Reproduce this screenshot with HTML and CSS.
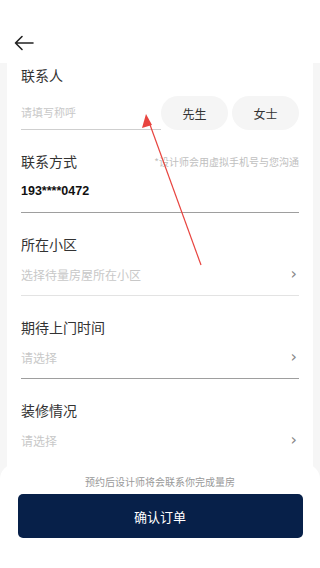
FILE: index.html
```html
<!DOCTYPE html>
<html lang="zh-CN">
<head>
<meta charset="utf-8">
<meta name="viewport" content="width=320, initial-scale=1">
<title>预约量房</title>
<link rel="stylesheet" href="styles.css">
</head>
<body>
<div class="page">
  <header class="topbar">
    <svg class="back" width="20" height="16" viewBox="0 0 20 16" fill="none" stroke="#222" stroke-width="1.6" stroke-linecap="round" stroke-linejoin="round">
      <path d="M19 8H1.5M8 1.5L1.5 8L8 14.5"/>
    </svg>
  </header>
  <main class="card">
    <section class="sec sec-first">
      <div class="label">联系人</div>
      <div class="name-row">
        <div class="name-input">请填写称呼</div>
        <div class="pill">先生</div>
        <div class="pill">女士</div>
      </div>
    </section>
    <section class="sec sec-dark">
      <div class="label-row">
        <div class="label">联系方式</div>
        <div class="hint">*设计师会用虚拟手机号与您沟通</div>
      </div>
      <div class="value phone">193****0472</div>
    </section>
    <section class="sec sec-light">
      <div class="label">所在小区</div>
      <div class="value select">
        <span>选择待量房屋所在小区</span>
        <span class="chev">›</span>
      </div>
    </section>
    <section class="sec sec-dark">
      <div class="label">期待上门时间</div>
      <div class="value select">
        <span>请选择</span>
        <span class="chev">›</span>
      </div>
    </section>
    <section class="sec sec-none">
      <div class="label">装修情况</div>
      <div class="value select">
        <span>请选择</span>
        <span class="chev">›</span>
      </div>
    </section>
  </main>
  <footer class="footer">
    <div class="tip">预约后设计师将会联系你完成量房</div>
    <div class="confirm">确认订单</div>
  </footer>
  <svg class="annot" width="320" height="568" viewBox="0 0 320 568">
    <line x1="201" y1="265" x2="149" y2="122" stroke="#e8443f" stroke-width="1.2"/>
    <polygon points="146,114 142,128 152,125" fill="#e8443f"/>
  </svg>
</div>
</body>
</html>
```
FILE: styles.css
```css
* { box-sizing: border-box; }
html, body { margin: 0; padding: 0; }
body {
  font-family: "Noto Sans CJK SC", "Noto Sans", Roboto, sans-serif;
  background: #f6f6f6;
  color: #333;
  width: 320px;
  height: 568px;
  overflow: hidden;
}
.page { position: relative; width: 320px; height: 568px; }
.topbar {
  height: 63px;
  background: #fff;
  display: flex;
  align-items: flex-start;
  padding: 35px 0 0 14px;
}
.back { display: block; }
.card {
  margin: 0 7px;
  background: #fff;
  padding: 0 14px;
  height: 505px;
}
.sec { display: flex; flex-direction: column; }
.label { font-size: 14px; line-height: 20px; color: #333; }
.sec-first { padding-top: 2px; }
.name-row {
  margin-top: 11px;
  display: flex;
  align-items: stretch;
  height: 34px;
}
.name-input {
  width: 140px;
  flex: none;
  border-bottom: 1px solid #cfcfcf;
  font-size: 11px;
  color: #c8c8c8;
  display: flex;
  align-items: center;
  padding-bottom: 1px;
}
.pill {
  width: 67px;
  flex: none;
  margin-left: 4px;
  border-radius: 17px;
  background: #f5f5f5;
  font-size: 12px;
  color: #333;
  display: flex;
  align-items: center;
  justify-content: center;
}
.name-input + .pill { margin-left: 0; }
.sec-dark, .sec-light, .sec-none { padding-top: 21px; padding-bottom: 6px; }
.sec-dark { border-bottom: 1px solid #9e9e9e; }
.sec-light { border-bottom: 1px solid #e3e3e3; }
.label-row { display: flex; justify-content: space-between; align-items: center; }
.hint { font-size: 10px; color: #c0c0c0; }
.value {
  margin-top: 5px;
  height: 30px;
  display: flex;
  align-items: center;
  font-size: 12px;
}
.phone { font-weight: bold; color: #111; font-family: "Liberation Sans", Arial, sans-serif; font-size: 12.5px; }
.select { justify-content: space-between; color: #c8c8c8; }
.chev { color: #888; font-size: 16px; line-height: 1; padding-right: 2px; font-family: "DejaVu Sans", sans-serif; }
.footer {
  position: absolute;
  left: 0;
  bottom: 0;
  width: 320px;
  height: 104px;
  background: #fff;
  border-radius: 15px 15px 0 0;
  display: flex;
  flex-direction: column;
  align-items: center;
  padding-top: 10px;
}
.tip { font-size: 10px; line-height: 16px; color: #999; }
.confirm {
  margin-top: 4px;
  width: 285px;
  height: 44px;
  background: #072049;
  color: #fff;
  border-radius: 5px;
  font-size: 13px;
  display: flex;
  align-items: center;
  justify-content: center;
}
.annot { position: absolute; left: 0; top: 0; pointer-events: none; }
```
